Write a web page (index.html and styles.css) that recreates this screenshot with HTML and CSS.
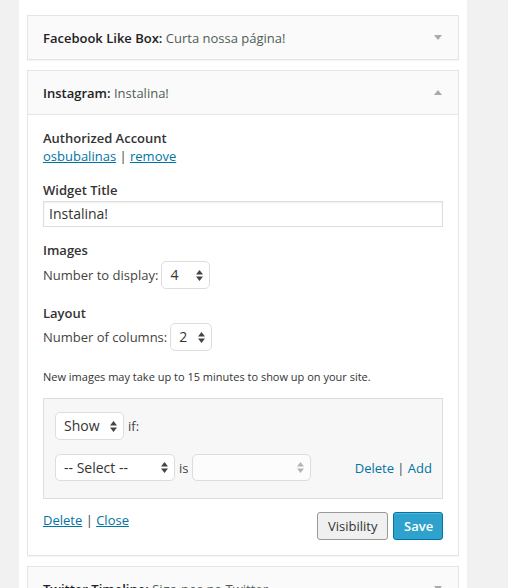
FILE: index.html
```html
<!DOCTYPE html>
<html>
<head>
<meta charset="utf-8">
<link rel="stylesheet" href="styles.css">
</head>
<body>
<div class="sidebar">
  <div class="widget">
    <div class="widget-top">
      <h4><span class="wname">Facebook Like Box:</span> <span class="in-title">Curta nossa página!</span></h4>
      <span class="arrow down"></span>
    </div>
  </div>

  <div class="widget">
    <div class="widget-top">
      <h4><span class="wname">Instagram:</span> <span class="in-title">Instalina!</span></h4>
      <span class="arrow up"></span>
    </div>
    <div class="widget-inside">
      <div class="label first">Authorized Account</div>
      <div class="line"><a href="#">osbubalinas</a> | <a href="#">remove</a></div>

      <div class="label title-label">Widget Title</div>
      <div class="input">Instalina!</div>

      <div class="label images-label">Images</div>
      <div class="row row-images">
        <span>Number to display:</span>
        <span class="select sel-num"><span class="val">4</span><svg class="spin" width="7" height="11" viewBox="0 0 7 11"><path d="M3.5 0 L7 4.5 L0 4.5 Z M0 6.5 L7 6.5 L3.5 11 Z"/></svg></span>
      </div>

      <div class="label layout-label">Layout</div>
      <div class="row row-layout">
        <span>Number of columns:</span>
        <span class="select sel-col"><span class="val">2</span><svg class="spin" width="7" height="11" viewBox="0 0 7 11"><path d="M3.5 0 L7 4.5 L0 4.5 Z M0 6.5 L7 6.5 L3.5 11 Z"/></svg></span>
      </div>

      <p class="note">New images may take up to 15 minutes to show up on your site.</p>

      <div class="conditions">
        <div class="cond-row">
          <span class="select sel-show"><span class="val">Show</span><svg class="spin" width="7" height="11" viewBox="0 0 7 11"><path d="M3.5 0 L7 4.5 L0 4.5 Z M0 6.5 L7 6.5 L3.5 11 Z"/></svg></span>
          <span class="word">if:</span>
        </div>
        <div class="cond-row second">
          <span class="select sel-major"><span class="val">-- Select --</span><svg class="spin" width="7" height="11" viewBox="0 0 7 11"><path d="M3.5 0 L7 4.5 L0 4.5 Z M0 6.5 L7 6.5 L3.5 11 Z"/></svg></span>
          <span class="word">is</span>
          <span class="select sel-minor disabled"><span class="val"></span><svg class="spin" width="7" height="11" viewBox="0 0 7 11"><path d="M3.5 0 L7 4.5 L0 4.5 Z M0 6.5 L7 6.5 L3.5 11 Z"/></svg></span>
          <span class="cond-links"><a href="#">Delete</a> | <a href="#">Add</a></span>
        </div>
      </div>

      <div class="footer">
        <div class="footer-links"><a href="#">Delete</a> | <a href="#">Close</a></div>
        <div class="buttons">
          <button class="button">Visibility</button>
          <button class="button primary">Save</button>
        </div>
      </div>
    </div>
  </div>

  <div class="widget">
    <div class="widget-top">
      <h4><span class="wname">Twitter Timeline:</span> <span class="in-title">Siga-nos no Twitter</span></h4>
      <span class="arrow down"></span>
    </div>
  </div>
</div>
</body>
</html>
```

FILE: styles.css
```css
html, body {
  margin: 0;
  padding: 0;
  background: #f1f1f1;
  height: 588px;
  overflow: hidden;
}
body {
  font-family: "Open Sans", "Liberation Sans", sans-serif;
  font-size: 13px;
  line-height: 18px;
  color: #444;
}
.sidebar {
  margin-left: 19px;
  width: 432px;
  padding: 15px 8px 40px;
  background: #fff;
}
.widget {
  border: 1px solid #e5e5e5;
  background: #fafafa;
  box-shadow: 0 1px 1px rgba(0,0,0,0.04);
  margin-bottom: 10px;
}
.widget-top {
  height: 43px;
  display: flex;
  align-items: center;
  justify-content: space-between;
  padding: 0 16px 0 15px;
}
.widget-top h4 {
  margin: 0;
  font-size: 13px;
  font-weight: 600;
  color: #222;
}
.in-title {
  font-weight: 400;
  color: #4f5c55;
}
.arrow {
  width: 0;
  height: 0;
  border-left: 4px solid transparent;
  border-right: 4px solid transparent;
}
.arrow.down { border-top: 5px solid #aaa; }
.arrow.up { border-bottom: 5px solid #aaa; }

.widget-inside {
  border-top: 1px solid #e5e5e5;
  background: #fff;
  padding: 14px 15px 15px;
}
.label {
  font-weight: 600;
  color: #333;
}
a { color: #0074a2; }
.title-label { margin-top: 16px; }
.input {
  margin-top: 2px;
  height: 24px;
  border: 1px solid #ddd;
  box-shadow: inset 0 1px 2px rgba(0,0,0,0.07);
  padding: 0 5px;
  font-size: 14px;
  line-height: 24px;
  color: #333;
}
.images-label { margin-top: 14px; }
.layout-label { margin-top: 15px; }
.row {
  display: flex;
  align-items: center;
  gap: 3px;
}
.row-images { margin-top: 2px; }
.row-layout { margin-top: 1px; }
.select {
  box-sizing: border-box;
  height: 28px;
  border: 1px solid #ddd;
  border-radius: 5px;
  background: #fff;
  display: inline-flex;
  align-items: center;
  justify-content: space-between;
  padding: 0 6px 0 8px;
  font-size: 14px;
  color: #333;
}
.spin { fill: #444; }
.sel-num { width: 49px; }
.sel-col { width: 42px; }
.sel-show { width: 69px; }
.sel-major { width: 120px; height: 27px; }
.sel-minor { width: 119px; height: 27px; background: #fcfcfc; }
.sel-minor .spin { fill: #b4b4b4; }
.note {
  margin: 17px 0 0;
  font-size: 11px;
  line-height: 17px;
  color: #333;
}
.conditions {
  margin-top: 13px;
  border: 1px solid #ddd;
  background: #f7f7f7;
  padding: 13px 10px 17px 11px;
}
.cond-row {
  display: flex;
  align-items: center;
}
.cond-row.second { margin-top: 14px; }
.word { margin: 0 4px; }
.cond-links { margin-left: auto; }
.cond-links a { text-decoration: none; }

.footer {
  margin-top: 13px;
  display: flex;
  align-items: flex-start;
  justify-content: space-between;
}
.footer-links { margin-top: -1px; }
.buttons {
  display: flex;
  gap: 5px;
}
.button {
  height: 28px;
  box-sizing: border-box;
  font-family: "Open Sans", "Liberation Sans", sans-serif;
  font-size: 13px;
  padding: 0 10px;
  border: 1px solid #999;
  border-radius: 3px;
  background: #f0f0f0;
  color: #333;
  width: 71px;
}
.button.primary {
  width: 50px;
  background: #2ea2cc;
  border-color: #0074a2;
  color: #fff;
  font-weight: 600;
  box-shadow: inset 0 1px 0 rgba(120,200,230,0.5);
}
```
